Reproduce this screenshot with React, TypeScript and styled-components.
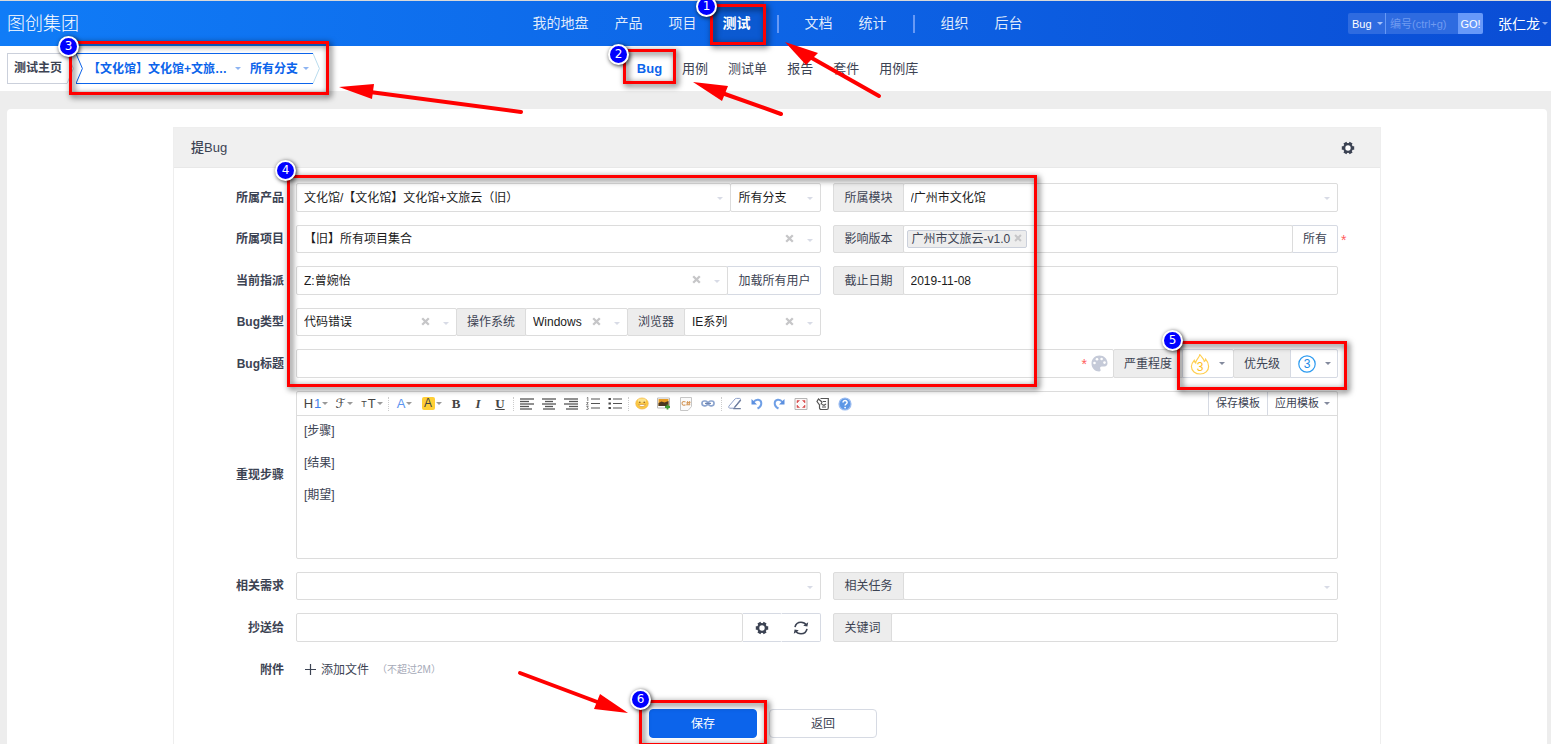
import React from 'react';
import styled, { createGlobalStyle, css } from 'styled-components';

const GlobalStyle = createGlobalStyle`
  *, *::before, *::after { box-sizing: border-box; }
  body {
    margin: 0;
    background: #ededed;
    color: #3c4353;
    font-family: "Liberation Sans", "Noto Sans CJK SC", sans-serif;
    font-size: 12px;
    line-height: 20px;
  }
  button, input, select, textarea { font: inherit; color: inherit; margin: 0; }
  button { cursor: pointer; }
  a { color: inherit; text-decoration: none; }
  svg { flex: none; }
`;

const Page = styled.div`
  position: relative;
  display: flex;
  flex-direction: column;
  min-height: 100vh;
  overflow: hidden;
`;

/* ---------- header ---------- */

const Header = styled.header`
  display: grid;
  grid-template-columns: 1fr auto 1fr;
  align-items: center;
  height: 46px;
  padding: 0 3px 0 7px;
  border-top: 1px solid #d9d9d9;
  background: linear-gradient(90deg, #107cf7, #0a4dd5);
  color: #fff;
`;

const Brand = styled.a`
  font-size: 18px;
  line-height: 24px;
  font-weight: 300;
`;

const MainNav = styled.nav`
  display: flex;
  height: 45px;
`;

const MainLink = styled.a<{ $active?: boolean }>`
  padding: 0 13px;
  font-size: 14px;
  line-height: 44px;
  color: ${p => (p.$active ? '#fff' : 'rgba(255,255,255,.88)')};
  font-weight: ${p => (p.$active ? 700 : 400)};
  background: ${p => (p.$active ? 'rgba(10,70,170,.35)' : 'transparent')};
`;

const NavDivider = styled.span`
  width: 2px;
  height: 18px;
  margin: 14px 13px;
  background: #6799f5;
`;

const HeaderTools = styled.div`
  display: flex;
  justify-content: flex-end;
  align-items: center;
  gap: 15px;
`;

const SearchForm = styled.form`
  display: flex;
  height: 21px;
  border-radius: 2px;
  overflow: hidden;
  background: #2e6be0;
  font-size: 11px;
`;

const SearchType = styled.button`
  display: flex;
  align-items: center;
  gap: 5px;
  width: 38px;
  padding: 0 0 0 4px;
  border: 0;
  border-right: 1px solid #6799f5;
  background: none;
  color: #fff;
`;

const SearchInput = styled.input`
  width: 72px;
  padding: 0 4px;
  border: 0;
  background: none;
  color: #fff;
  &::placeholder { color: #6f9af0; opacity: 1; }
`;

const SearchGo = styled.button`
  width: 25px;
  padding: 0;
  border: 0;
  background: #6799f9;
  color: #fff;
`;

const UserButton = styled.button`
  display: flex;
  align-items: center;
  gap: 2px;
  padding: 0;
  border: 0;
  background: none;
  font-size: 14px;
  color: #fff;
`;

const Caret = styled.i<{ $color?: string }>`
  flex: none;
  width: 0;
  height: 0;
  border: 3px solid transparent;
  border-top-color: ${p => p.$color || '#838a9d'};
  border-bottom: 0;
`;

/* ---------- sub header ---------- */

const SubHeader = styled.div`
  display: grid;
  grid-template-columns: 1fr auto 1fr;
  align-items: center;
  height: 45px;
  padding: 0 3px 0 7px;
  background: #fff;
`;

const Crumbs = styled.div`
  display: flex;
  gap: 1px;
  height: 31px;
  font-weight: 700;
`;

const CrumbHome = styled.a`
  display: flex;
  line-height: 29px;
`;

const CrumbHomeText = styled.span`
  padding: 0 0 0 6px;
  width: 60px;
  border: 1px solid #cbd0db;
  border-right: 0;
`;

const CrumbProduct = styled.div`
  display: flex;
  margin-left: 1px;
  color: #0c64eb;
`;

const CrumbBody = styled.div`
  display: flex;
  align-items: center;
  border: solid #0c64eb;
  border-width: 1px 0;
`;

const CrumbButton = styled.button`
  display: flex;
  align-items: center;
  gap: 5px;
  padding: 0 4px 0 5px;
  border: 0;
  background: none;
  font-weight: 700;
`;

const CrumbName = styled.span`
  width: 142px;
  overflow: hidden;
  white-space: nowrap;
  text-align: left;
`;

const SubNav = styled.nav`
  display: flex;
`;

const SubLink = styled.a<{ $active?: boolean }>`
  padding: 0 10px;
  font-size: 13px;
  line-height: 44px;
  ${p => p.$active && css`
    color: #0c64eb;
    font-weight: 700;
  `}
`;

/* ---------- panel ---------- */

const Content = styled.main`
  flex: 1;
  display: flex;
  margin: 18px 4px 0 7px;
  padding: 18px 16px 0;
  border-radius: 4px 4px 0 0;
  background: #fff;
`;

const Panel = styled.section`
  width: 100%;
  max-width: 1208px;
  margin: 0 auto;
  border: 1px solid #eee;
  border-bottom: 0;
`;

const PanelHead = styled.div`
  display: flex;
  align-items: center;
  justify-content: space-between;
  height: 40px;
  padding: 0 25px 0 17px;
  background: #f0f0f0;
  border-bottom: 1px solid #e8e8e8;
`;

const PanelTitle = styled.h2`
  margin: 0;
  font-size: 13px;
  line-height: 20px;
  font-weight: 500;
`;

const BareButton = styled.button`
  display: flex;
  padding: 0;
  border: 0;
  background: none;
`;

const BugForm = styled.form`
  display: flex;
  flex-direction: column;
  gap: 13px;
  padding: 15px 42px 6px 14px;
`;

const Row = styled.div<{ $short?: boolean; $tall?: boolean }>`
  display: grid;
  grid-template-columns: 96px minmax(0, 525fr) minmax(0, 504fr);
  column-gap: 13px;
  height: ${p => (p.$tall ? 168 : p.$short ? 28 : 29)}px;
`;

const Label = styled.label`
  align-self: center;
  text-align: right;
  font-weight: 700;
`;

const Group = styled.div<{ $wide?: boolean }>`
  position: relative;
  display: flex;
  min-width: 0;
  margin-left: -1px;
  grid-column: ${p => (p.$wide ? '2 / 4' : 'auto')};
  & > * + * { margin-left: -1px; }
`;

const Addon = styled.label`
  flex: none;
  display: flex;
  align-items: center;
  padding: 0 10px;
  border: 1px solid #dcdcdc;
  border-radius: 2px 0 0 2px;
  background: #ededed;
`;

const Control = styled.div<{ $width?: number }>`
  position: relative;
  display: flex;
  align-items: center;
  flex: ${p => (p.$width ? `0 0 ${p.$width}px` : '1 1 0')};
  min-width: 0;
  border: 1px solid #dcdcdc;
  border-radius: 2px;
  background: #fff;
  color: #1b1b1b;
`;

const Native = styled.select`
  width: 100%;
  height: 100%;
  padding: 0 7px;
  border: 0;
  outline: 0;
  appearance: none;
  background: none;
`;

const TextInput = styled.input`
  flex: 1;
  min-width: 0;
  height: 100%;
  padding: 0 7px;
  border: 0;
  outline: 0;
  background: none;
`;

const SelectCaret = styled(Caret)`
  position: absolute;
  right: 7px;
  top: 13px;
`;

const Clear = styled.button<{ $small?: boolean }>`
  display: flex;
  padding: ${p => (p.$small ? '3px 0 0' : '0')};
  border: 0;
  background: none;
  ${p => !p.$small && css`
    position: absolute;
    right: 26px;
    top: 8px;
  `}
`;

const SideButton = styled.button<{ $width?: number }>`
  flex: none;
  display: flex;
  align-items: center;
  justify-content: center;
  gap: 9px;
  ${p => p.$width && `width: ${p.$width}px;`}
  padding: 0 ${p => (p.$width ? 6 : 10)}px;
  border: 1px solid #d6dae3;
  border-radius: 0 2px 2px 0;
  background: #fff;
`;

const Tag = styled.span`
  display: flex;
  align-items: flex-start;
  gap: 4px;
  height: 18px;
  margin-left: 3px;
  padding: 0 4px;
  border: 1px solid #cbd0db;
  border-radius: 2px;
  background: #ededed;
  line-height: 16px;
  color: #3c4353;
  white-space: nowrap;
`;

const Star = styled.span<{ $outside?: boolean }>`
  color: #ff5d5d;
  font-size: 14px;
  line-height: 20px;
  ${p => p.$outside && css`
    position: absolute;
    left: 100%;
    top: 5px;
    padding-left: 4px;
  `}
`;

const TitleTools = styled.span`
  display: flex;
  align-items: center;
  gap: 4px;
  padding-right: 5px;
`;

const IconButton = styled(SideButton)`
  border-left-color: #fff;
`;

/* ---------- editor ---------- */

const Editor = styled.div`
  grid-column: 2 / 4;
  display: flex;
  flex-direction: column;
  margin-left: -1px;
  border: 1px solid #dcdcdc;
  border-radius: 2px;
`;

const Toolbar = styled.div`
  display: flex;
  align-items: center;
  height: 24px;
  padding-left: 5px;
  border-bottom: 1px solid #dcdcdc;
`;

const Tool = styled.button<{ $drop?: number }>`
  display: flex;
  align-items: center;
  justify-content: center;
  flex: none;
  gap: 1px;
  width: ${p => p.$drop || 22}px;
  height: 22px;
  padding: 0;
  border: 0;
  background: none;
  color: #444;
`;

const ToolSep = styled.span`
  flex: none;
  width: 1px;
  height: 14px;
  margin: 0 2px;
  border-left: 1px dotted #ccc;
`;

const Glyph = styled.span<{ $size?: number; $color?: string }>`
  font-size: ${p => p.$size || 13}px;
  line-height: 16px;
  color: ${p => p.$color || '#444'};
`;

const SerifGlyph = styled(Glyph)<{ $italic?: boolean; $underline?: boolean }>`
  font-family: "Liberation Serif", serif;
  font-weight: 700;
  font-style: ${p => (p.$italic ? 'italic' : 'normal')};
  text-decoration: ${p => (p.$underline ? 'underline' : 'none')};
`;

const ScriptGlyph = styled(Glyph)`
  font-family: "DejaVu Sans", sans-serif;
`;

const Highlight = styled(Glyph)`
  width: 13px;
  line-height: 13px;
  border-radius: 2px;
  background: #ffcf36;
  text-align: center;
`;

const Templates = styled.div`
  display: flex;
  align-self: stretch;
  margin-left: auto;
`;

const TemplateButton = styled.button`
  display: flex;
  align-items: center;
  gap: 5px;
  padding: 0 7px 1px;
  border: 0;
  border-left: 1px solid #d6dae3;
  background: none;
  font-size: 11px;
`;

const Steps = styled.textarea`
  flex: 1;
  padding: 7px;
  border: 0;
  outline: 0;
  resize: none;
  background: none;
  line-height: 16px;
`;

/* ---------- bottom ---------- */

const FileArea = styled.div`
  display: flex;
  align-items: center;
  padding-left: 8px;
`;

const FileLabel = styled.label`
  display: flex;
  align-items: center;
  gap: 5px;
  cursor: pointer;
`;

const HiddenFile = styled.input`
  position: absolute;
  width: 1px;
  height: 1px;
  opacity: 0;
`;

const Hint = styled.span`
  margin-left: 8px;
  font-size: 10px;
  color: #a6aab8;
`;

const Actions = styled.div`
  display: flex;
  justify-content: center;
  gap: 12px;
  padding-top: 12px;
`;

const ActionButton = styled.button<{ $primary?: boolean }>`
  width: 108px;
  height: 29px;
  padding: 0;
  border: 1px solid ${p => (p.$primary ? '#0c64eb' : '#d6dae3')};
  border-radius: 4px;
  background: ${p => (p.$primary ? '#0c64eb' : '#fff')};
  color: ${p => (p.$primary ? '#fff' : '#3c4353')};
`;

/* ---------- annotations ---------- */

const Notes = styled.div`
  position: absolute;
  inset: 0;
  overflow: hidden;
  pointer-events: none;
`;

const NoteBox = styled.div<{ $x: number; $y: number; $w: number; $h: number }>`
  position: absolute;
  left: ${p => p.$x}px;
  top: ${p => p.$y}px;
  width: ${p => p.$w}px;
  height: ${p => p.$h}px;
  border: 3px solid #f00;
  filter: drop-shadow(2px 2px 3px rgba(0, 0, 0, .75));
`;

const NoteBadge = styled.span<{ $x: number; $y: number }>`
  position: absolute;
  left: ${p => p.$x - 10}px;
  top: ${p => p.$y - 10}px;
  width: 21px;
  height: 21px;
  border: 2px solid #fff;
  border-radius: 50%;
  background: #00f;
  box-shadow: 1px 1px 4px rgba(0, 0, 0, .8);
  color: #fff;
  font-family: "DejaVu Sans", sans-serif;
  font-size: 12px;
  line-height: 17px;
  text-align: center;
`;

const ArrowLayer = styled.svg`
  position: absolute;
  left: 0;
  top: 0;
`;

/* ---------- icons ---------- */

const Gear = () => (
  <svg width="14" height="14" viewBox="0 0 14 14">
    <g stroke="#3c4353" strokeWidth="3.4">
      <path d="M.8 7h12.4M3.9 1.6l6.2 10.8M10.1 1.6L3.9 12.4" />
    </g>
    <circle cx="7" cy="7" r="4.9" fill="#3c4353" />
    <circle cx="7" cy="7" r="2.7" fill="#fff" />
  </svg>
);

const Cross = ({ size = 9 }: { size?: number }) => (
  <svg width={size} height={size} viewBox="0 0 9 9">
    <path d="M1.2 1.2l6.6 6.6M7.8 1.2L1.2 7.8" stroke="#c6c6c8" strokeWidth="2.3" />
  </svg>
);

const Refresh = () => (
  <svg width="16" height="14" viewBox="0 0 16 14" fill="none" stroke="#3c4353" strokeWidth="1.6">
    <path d="M2 6.2C2.6 3.300 5 1.300 8 1.300c2.300 0 4.200 1 5.300 2.900M14 7.800c-.6 2.900-3 4.900-6 4.900-2.300 0-4.200-1-5.300-2.900" />
    <path d="M15.200 1.300L14.400 5.600 10.200 4.800zM.8 12.700L1.600 8.400 5.800 9.200z" fill="#3c4353" stroke="none" />
  </svg>
);

const Palette = () => (
  <svg width="17" height="17" viewBox="0 0 17 17">
    <path d="M8.500.6C4 .6.5 4 .5 8.500s3.500 8 7.600 8c1.500 0 1.900-1.200 1.300-2.300-.7-1.300-.2-2.700 1.500-2.700h2.600c1.800 0 3-1.300 3-3.200C16.500 3.900 13 .6 8.500.6z" fill="#c5cad8" />
    <g fill="#fff">
      <circle cx="3.500" cy="8" r="1.300" /><circle cx="6" cy="4.200" r="1.300" />
      <circle cx="10.600" cy="4" r="1.300" /><circle cx="13.500" cy="7.600" r="1.300" />
    </g>
  </svg>
);

const Flame = () => (
  <svg width="20" height="22" viewBox="0 0 20 22">
    <path d="M10 1c.6 3 4 4.600 4.300 7.400.8-.4 1.200-1.200 1.300-2.200 1.900 2.100 3 4.700 3 7.200 0 4.500-3.600 7.600-8.400 7.600S1.400 18 1.400 13.600c0-2.700 1.300-4.500 2.800-6.200.2 1.200.6 2 1.400 2.500C5.800 6.200 9.600 5 10 1z" fill="none" stroke="#ffcf52" strokeWidth="1.200" />
    <text x="10" y="18" textAnchor="middle" fontSize="12" fill="#ffbe1a">3</text>
  </svg>
);

const Priority = () => (
  <svg width="18" height="18" viewBox="0 0 18 18">
    <circle cx="9" cy="9" r="8.200" fill="none" stroke="#2d9bf0" strokeWidth="1.200" />
    <text x="9" y="13" textAnchor="middle" fontSize="12" fill="#1c8ae6">3</text>
  </svg>
);

const Lines = ({ rows }: { rows: [number, number][] }) => (
  <svg width="14" height="12" viewBox="0 0 14 12">
    {rows.map(([a, b], i) => (
      <path key={i} d={`M${a} ${i * (10 / (rows.length - 1)) + 1}H${b}`} stroke="#555" strokeWidth="1.300" />
    ))}
  </svg>
);

const NumberedList = () => (
  <svg width="14" height="13" viewBox="0 0 14 13">
    <path d="M5 2h9M5 6.500h9M5 11h9" stroke="#555" strokeWidth="1.200" />
    <path d="M.8 1l1-.6V4M.4 5.500h1.800L.5 7.900h2M.4 9.500h1.800L1.400 10.700l1 .5-.4 1.200H.3" fill="none" stroke="#666" strokeWidth=".8" />
  </svg>
);

const BulletList = () => (
  <svg width="14" height="13" viewBox="0 0 14 13">
    <path d="M5 2h9M5 6.500h9M5 11h9" stroke="#555" strokeWidth="1.200" />
    <path d="M.5 2h2.400M.5 6.500h2.400M.5 11h2.400" stroke="#444" strokeWidth="2.200" />
  </svg>
);

const Smiley = () => (
  <svg width="14" height="13" viewBox="0 0 14 13">
    <ellipse cx="7" cy="6.500" rx="6.300" ry="5.600" fill="#fbc843" stroke="#f0b445" strokeWidth=".6" />
    <ellipse cx="7" cy="3.600" rx="4.200" ry="2" fill="#fde48d" />
    <circle cx="4.800" cy="5.200" r=".8" fill="#8a5a1c" /><circle cx="9.200" cy="5.200" r=".8" fill="#8a5a1c" />
    <path d="M3.600 7.500c1 2.800 5.800 2.800 6.800 0z" fill="#fff" stroke="#c98a2c" strokeWidth=".6" />
  </svg>
);

const Picture = () => (
  <svg width="14" height="13" viewBox="0 0 14 13">
    <path d="M.5 1h12v10H.5z" fill="#fff" stroke="#bbb" />
    <path d="M1.500 2h10v7h-10z" fill="#e79b22" />
    <path d="M1.500 6l3-1.500 3 1 4-1.500v5h-10z" fill="#4b3721" />
    <path d="M10.500 7.500v5M8 10h5" stroke="#3f9e35" strokeWidth="1.800" />
  </svg>
);

const CodeDoc = () => (
  <svg width="14" height="14" viewBox="0 0 14 14">
    <path d="M1.500.5h11v9l-3.500 4H1.500z" fill="#fbfbfb" stroke="#c6c6c6" />
    <path d="M6.500 5C4.500 3.800 3 4.800 3 6.300s1.500 2.600 3.500 1.500M8.700 4.200L8 8.500M10.700 4.200L10 8.500M7.500 5.500h4M7.300 7.200h4" fill="none" stroke="#d59a5c" strokeWidth="1.100" />
  </svg>
);

const Chain = () => (
  <svg width="14" height="9" viewBox="0 0 14 9">
    <g fill="none" stroke="#8da5cf" strokeWidth="1.700">
      <rect x="1" y="2" width="5.500" height="4.800" rx="2.200" />
      <rect x="7.500" y="2" width="5.500" height="4.800" rx="2.200" />
    </g>
    <path d="M4 4.400h6" stroke="#7186b0" strokeWidth="1.200" />
  </svg>
);

const Eraser = () => (
  <svg width="14" height="13" viewBox="0 0 14 13">
    <path d="M1 9l6-7c.4-.5.900-.6 1.500-.6h3c1 0 1.300.8.7 1.600L6.500 10.500c-.4.500-.8.700-1.400.7H1.800C.8 11.200.3 10 1 9z" fill="#fdfdff" stroke="#8d9fc6" />
    <path d="M5.200 11.600h7.600M6.500 10.500L12.800 3" stroke="#6e7d9e" strokeWidth="1.200" />
  </svg>
);

const Undo = ({ flip }: { flip?: boolean }) => (
  <svg width="14" height="13" viewBox="0 0 14 13">
    <g transform={flip ? 'matrix(-1 0 0 1 14 0)' : undefined}>
      <path d="M3.500 5C6 1.800 11 2 11.300 6c.1 2.400-1.500 4.300-3.800 5.500" fill="none" stroke="#6f9fe6" strokeWidth="2" />
      <path d="M1.500 2v5.600h5.500z" fill="#5b8fe0" />
    </g>
  </svg>
);

const Expand = () => (
  <svg width="14" height="14" viewBox="0 0 14 14">
    <path d="M1 1.500h12v11H1z" fill="#fdf8f8" stroke="#b5b5b5" />
    <path d="M3 3.500h2.500L3 6zM11 3.500H8.500L11 6zM3 10.500h2.500L3 8zM11 10.500H8.500L11 8z" fill="#d94c4c" stroke="#d94c4c" strokeWidth=".5" />
  </svg>
);

const Source = () => (
  <svg width="14" height="14" viewBox="0 0 14 14" fill="none" stroke="#555" strokeWidth="1.200">
    <path d="M4.500 1.500h7.800v9.200c0 1.200-.6 1.800-1.500 1.800H5.200c-1 0-1.700-.7-1.700-1.800V8L1 4.500 2.500 2l3.500 3-1 2.500" />
    <path d="M7 4.500h3M6 7.500l2 .8L10 7M6 10h4" />
  </svg>
);

const Help = () => (
  <svg width="14" height="14" viewBox="0 0 14 14">
    <circle cx="7" cy="7" r="6" fill="#5d97e6" stroke="#9dbdf0" strokeWidth="1.200" />
    <path d="M5 5.600c0-2.700 4.200-2.600 4.100-.1C9.100 7 7.100 7 7.100 8.600" fill="none" stroke="#fff" strokeWidth="1.500" />
    <circle cx="7.100" cy="10.600" r=".9" fill="#fff" />
  </svg>
);

const ChevronEnd = ({ color, notch }: { color: string; notch?: boolean }) => (
  <svg width="7" height="31" viewBox="0 0 7 31" fill="none" stroke={color}>
    <path d={notch ? 'M0 .5h7M0 .5l6.400 15L0 30.500h7' : 'M0 .5l6.400 15L0 30.500'} />
  </svg>
);

/* ---------- parts ---------- */

type PickProps = {
  id: string;
  value?: string;
  width?: number;
  clear?: boolean;
  label?: string;
};

const Pick = ({ id, value = '', width, clear, label }: PickProps) => (
  <Control $width={width}>
    <Native id={id} aria-label={label} defaultValue={value}>
      <option value={value}>{value}</option>
    </Native>
    {clear && <Clear type="button" aria-label="清除"><Cross /></Clear>}
    <SelectCaret $color="#d8dbe6" />
  </Control>
);

const ToolCaret = () => <Caret $color="#999" />;

const mainLinks = [
  ['我的地盘', '产品', '项目', '测试'],
  ['文档', '统计'],
  ['组织', '后台'],
];
const subLinks = ['Bug', '用例', '测试单', '报告', '套件', '用例库'];

const boxes = [
  { n: 1, x: 710, y: 4, w: 56, h: 41, bx: 706, by: 6 },
  { n: 2, x: 623, y: 49, w: 53, h: 35, bx: 618, by: 54 },
  { n: 3, x: 69, y: 41, w: 260, h: 54, bx: 68, by: 46 },
  { n: 4, x: 287, y: 175, w: 750, h: 212, bx: 285, by: 170 },
  { n: 5, x: 1177, y: 341, w: 170, h: 49, bx: 1172, by: 340 },
  { n: 6, x: 639, y: 700, w: 128, h: 46, bx: 640, by: 699 },
];

const arrows = [
  { line: 'M521 112L370 92', head: '339,87 374,84 372,99' },
  { line: 'M879 96L810 57', head: '785,42 818,53 806,65' },
  { line: 'M781 114L722 93', head: '693,82 728,86 722,101' },
  { line: 'M520 673L600 703', head: '628,713 600,694 594,709' },
];

export default function App() {
  return (
    <Page>
      <GlobalStyle />
      <Header>
        <Brand href="#">图创集团</Brand>
        <MainNav>
          {mainLinks.map((group, i) => (
            <React.Fragment key={i}>
              {i > 0 && <NavDivider />}
              {group.map(t => <MainLink key={t} href="#" $active={t === '测试'}>{t}</MainLink>)}
            </React.Fragment>
          ))}
        </MainNav>
        <HeaderTools>
          <SearchForm>
            <SearchType type="button">Bug <Caret $color="#a9c4fa" /></SearchType>
            <SearchInput aria-label="编号" placeholder="编号(ctrl+g)" />
            <SearchGo type="button">GO!</SearchGo>
          </SearchForm>
          <UserButton type="button">张仁龙<Caret $color="#8fb0f5" /></UserButton>
        </HeaderTools>
      </Header>

      <SubHeader>
        <Crumbs>
          <CrumbHome href="#">
            <CrumbHomeText>测试主页</CrumbHomeText>
            <ChevronEnd color="#cbd0db" />
          </CrumbHome>
          <CrumbProduct>
            <ChevronEnd color="#0c64eb" notch />
            <CrumbBody>
              <CrumbButton type="button"><CrumbName>【文化馆】文化馆+文旅…</CrumbName><Caret $color="#8db4f2" /></CrumbButton>
              <CrumbButton type="button">所有分支<Caret $color="#8db4f2" /></CrumbButton>
            </CrumbBody>
            <ChevronEnd color="#b9dcee" />
          </CrumbProduct>
        </Crumbs>
        <SubNav>
          {subLinks.map(t => <SubLink key={t} href="#" $active={t === 'Bug'}>{t}</SubLink>)}
        </SubNav>
      </SubHeader>

      <Content>
        <Panel>
          <PanelHead>
            <PanelTitle>提Bug</PanelTitle>
            <BareButton type="button" aria-label="设置"><Gear /></BareButton>
          </PanelHead>
          <BugForm>
            <Row>
              <Label htmlFor="product">所属产品</Label>
              <Group>
                <Pick id="product" value="文化馆/【文化馆】文化馆+文旅云（旧）" />
                <Pick id="branch" label="分支" value="所有分支" width={91} />
              </Group>
              <Group>
                <Addon htmlFor="module">所属模块</Addon>
                <Pick id="module" value="/广州市文化馆" />
              </Group>
            </Row>
            <Row $short>
              <Label htmlFor="project">所属项目</Label>
              <Group>
                <Pick id="project" value="【旧】所有项目集合" clear />
              </Group>
              <Group>
                <Addon htmlFor="build">影响版本</Addon>
                <Control>
                  <Tag>广州市文旅云-v1.0<Clear type="button" $small aria-label="移除"><Cross size={8} /></Clear></Tag>
                  <TextInput id="build" />
                </Control>
                <SideButton type="button">所有</SideButton>
                <Star $outside>*</Star>
              </Group>
            </Row>
            <Row>
              <Label htmlFor="assigned">当前指派</Label>
              <Group>
                <Pick id="assigned" value="Z:曾婉怡" clear />
                <SideButton type="button">加载所有用户</SideButton>
              </Group>
              <Group>
                <Addon htmlFor="deadline">截止日期</Addon>
                <Control><TextInput id="deadline" defaultValue="2019-11-08" /></Control>
              </Group>
            </Row>
            <Row $short>
              <Label htmlFor="type">Bug类型</Label>
              <Group>
                <Pick id="type" value="代码错误" width={161} clear />
                <Addon htmlFor="os">操作系统</Addon>
                <Pick id="os" value="Windows" width={103} clear />
                <Addon htmlFor="browser">浏览器</Addon>
                <Pick id="browser" value="IE系列" clear />
              </Group>
            </Row>
            <Row>
              <Label htmlFor="title">Bug标题</Label>
              <Group $wide>
                <Control>
                  <TextInput id="title" />
                  <TitleTools><Star>*</Star><BareButton type="button" aria-label="标题颜色"><Palette /></BareButton></TitleTools>
                </Control>
                <Addon htmlFor="severity">严重程度</Addon>
                <SideButton id="severity" type="button" $width={52}><Flame /><Caret /></SideButton>
                <Addon htmlFor="pri">优先级</Addon>
                <SideButton id="pri" type="button" $width={48}><Priority /><Caret /></SideButton>
              </Group>
            </Row>
            <Row $tall>
              <Label htmlFor="steps">重现步骤</Label>
              <Editor>
                <Toolbar>
                  <Tool type="button" $drop={28} aria-label="标题"><Glyph>H</Glyph><Glyph $color="#3f7fe8">1</Glyph><ToolCaret /></Tool>
                  <Tool type="button" $drop={28} aria-label="字体"><ScriptGlyph>ℱ</ScriptGlyph><ToolCaret /></Tool>
                  <Tool type="button" $drop={28} aria-label="字号"><Glyph $size={9}>T</Glyph><Glyph>T</Glyph><ToolCaret /></Tool>
                  <ToolSep />
                  <Tool type="button" $drop={27} aria-label="文字颜色"><Glyph $color="#5b94f0">A</Glyph><ToolCaret /></Tool>
                  <Tool type="button" $drop={27} aria-label="背景颜色"><Highlight $size={12}>A</Highlight><ToolCaret /></Tool>
                  <Tool type="button" aria-label="粗体"><SerifGlyph>B</SerifGlyph></Tool>
                  <Tool type="button" aria-label="斜体"><SerifGlyph $italic>I</SerifGlyph></Tool>
                  <Tool type="button" aria-label="下划线"><SerifGlyph $underline>U</SerifGlyph></Tool>
                  <ToolSep />
                  <Tool type="button" aria-label="左对齐"><Lines rows={[[0, 14], [0, 9], [0, 14], [0, 9], [0, 12]]} /></Tool>
                  <Tool type="button" aria-label="居中"><Lines rows={[[0, 14], [3, 11], [0, 14], [3, 11], [1, 13]]} /></Tool>
                  <Tool type="button" aria-label="右对齐"><Lines rows={[[0, 14], [5, 14], [0, 14], [5, 14], [2, 14]]} /></Tool>
                  <Tool type="button" aria-label="编号列表"><NumberedList /></Tool>
                  <Tool type="button" aria-label="项目列表"><BulletList /></Tool>
                  <ToolSep />
                  <Tool type="button" aria-label="表情"><Smiley /></Tool>
                  <Tool type="button" aria-label="图片"><Picture /></Tool>
                  <Tool type="button" aria-label="代码"><CodeDoc /></Tool>
                  <Tool type="button" aria-label="链接"><Chain /></Tool>
                  <ToolSep />
                  <Tool type="button" aria-label="清除格式"><Eraser /></Tool>
                  <Tool type="button" aria-label="撤销"><Undo /></Tool>
                  <Tool type="button" aria-label="重做"><Undo flip /></Tool>
                  <Tool type="button" aria-label="全屏"><Expand /></Tool>
                  <Tool type="button" aria-label="源码"><Source /></Tool>
                  <Tool type="button" aria-label="帮助"><Help /></Tool>
                  <Templates>
                    <TemplateButton type="button">保存模板</TemplateButton>
                    <TemplateButton type="button">应用模板<Caret /></TemplateButton>
                  </Templates>
                </Toolbar>
                <Steps id="steps" defaultValue={'[步骤]\n\n[结果]\n\n[期望]'} />
              </Editor>
            </Row>
            <Row $short>
              <Label htmlFor="story">相关需求</Label>
              <Group><Pick id="story" /></Group>
              <Group>
                <Addon htmlFor="task">相关任务</Addon>
                <Pick id="task" />
              </Group>
            </Row>
            <Row>
              <Label htmlFor="mailto">抄送给</Label>
              <Group>
                <Control><TextInput id="mailto" /></Control>
                <IconButton type="button" $width={40} aria-label="设置"><Gear /></IconButton>
                <IconButton type="button" $width={40} aria-label="刷新"><Refresh /></IconButton>
              </Group>
              <Group>
                <Addon htmlFor="keywords">关键词</Addon>
                <Control><TextInput id="keywords" /></Control>
              </Group>
            </Row>
            <Row>
              <Label htmlFor="files">附件</Label>
              <FileArea>
                <FileLabel>
                  <svg width="11" height="11" viewBox="0 0 11 11"><path d="M5.500 0v11M0 5.500h11" stroke="#3c4353" strokeWidth="1.200" /></svg>
                  添加文件
                  <HiddenFile id="files" type="file" />
                </FileLabel>
                <Hint>（不超过2M）</Hint>
              </FileArea>
            </Row>
            <Actions>
              <ActionButton type="button" $primary>保存</ActionButton>
              <ActionButton type="button">返回</ActionButton>
            </Actions>
          </BugForm>
        </Panel>
      </Content>

      <Notes>
        {boxes.map(b => <NoteBox key={b.n} $x={b.x} $y={b.y} $w={b.w} $h={b.h} />)}
        {boxes.map(b => <NoteBadge key={b.n} $x={b.bx} $y={b.by}>{b.n}</NoteBadge>)}
        <ArrowLayer width="900" height="740">
          {arrows.map(a => (
            <g key={a.line}>
              <path d={a.line} stroke="#f00" strokeWidth="4" strokeLinecap="round" />
              <polygon points={a.head} fill="#f00" />
            </g>
          ))}
        </ArrowLayer>
      </Notes>
    </Page>
  );
}
